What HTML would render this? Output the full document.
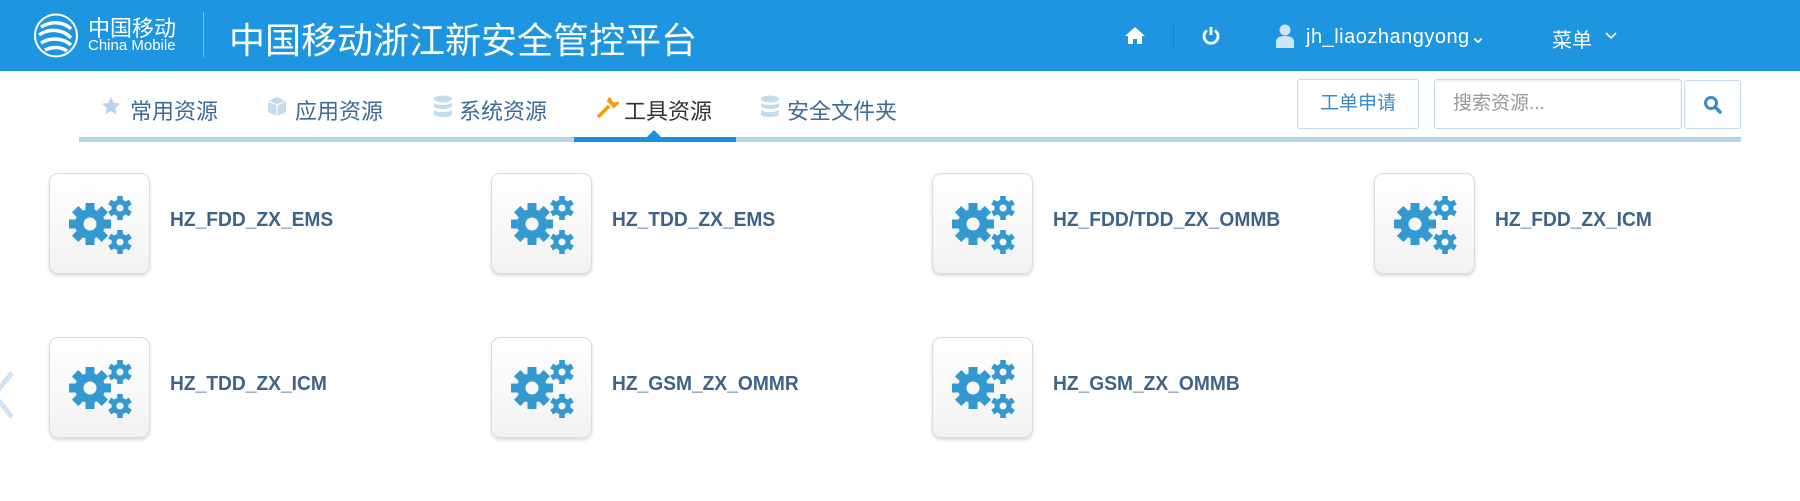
<!DOCTYPE html>
<html><head><meta charset="utf-8"><style>
*{margin:0;padding:0;box-sizing:border-box}
body{width:1800px;height:501px;background:#fff;font-family:"Liberation Sans","Noto Sans CJK SC",sans-serif;position:relative;overflow:hidden}
.hdr{position:absolute;left:0;top:0;width:1800px;height:71px;background:#1e95e1;color:#fff}
.a{position:absolute;white-space:nowrap}
.tab{position:absolute;top:94px;font-size:22px;color:#3d6b99;white-space:nowrap}
.card{position:absolute;width:101px;height:101px;border:1px solid #dcdcdc;border-radius:9px;background:linear-gradient(#fff,#f2f2f2);box-shadow:0 2px 3px rgba(0,0,0,.15)}
.lbl{position:absolute;font-size:20px;font-weight:bold;color:#3f6288;white-space:nowrap;transform:scaleX(.96);transform-origin:left}
</style></head><body>
<div class="hdr">
 <svg class="a" style="left:33px;top:13px" width="46" height="45" viewBox="0 0 46 45"><circle cx="23" cy="22.5" r="21" fill="none" stroke="#fff" stroke-width="2"/><path d="M8 14c10-6 22-6 30 2M6 22c10-7 24-6 32 3M8 30c10-6 22-5 30 2M12 37c8-4 16-3 22 1" stroke="#fff" stroke-width="3.5" fill="none"/></svg>
 <div class="a" style="left:88px;top:11px;font-size:22px;letter-spacing:0px">中国移动</div>
 <div class="a" style="left:88px;top:37px;font-size:15px">China Mobile</div>
 <div class="a" style="left:203px;top:12px;width:1px;height:45px;background:rgba(255,255,255,.4)"></div>
 <div class="a" style="left:229px;top:12px;font-size:36px">中国移动浙江新安全管控平台</div>
 <svg class="a" style="left:1124px;top:26px" width="22" height="18" viewBox="0 0 22 18"><path d="M11 1L1 10h3v8h5v-5h4v5h5v-8h3z" fill="#fff"/></svg>
 <div class="a" style="left:1173px;top:23px;width:1px;height:24px;background:rgba(0,0,0,.15)"></div>
 <svg class="a" style="left:1202px;top:26px" width="18" height="19" viewBox="0 0 18 19"><path d="M5 4.5A7 7 0 1 0 13 4.5" stroke="#fff" stroke-width="2.8" fill="none"/><path d="M9 1v8" stroke="#fff" stroke-width="2.8"/></svg>
 <svg class="a" style="left:1275px;top:24px" width="20" height="24" viewBox="0 0 20 24"><circle cx="10" cy="6" r="5.5" fill="#cfe6f8"/><path d="M1 24v-6c0-4 3-6 9-6s9 2 9 6v6z" fill="#cfe6f8"/></svg>
 <div class="a" style="left:1306px;top:24px;font-size:20px;letter-spacing:.5px">jh_liaozhangyong⌄</div>
 <div class="a" style="left:1552px;top:24px;font-size:20px">菜单</div>
 <svg class="a" style="left:1605px;top:32px" width="12" height="8" viewBox="0 0 12 8"><path d="M1 1l5 5 5-5" stroke="#fff" stroke-width="1.6" fill="none"/></svg>
</div>
<svg class="a" style="left:101px;top:96px" width="20" height="20" viewBox="0 0 20 20"><path d="M10 1l2.8 6 6.4.6-4.9 4.3 1.5 6.4L10 15l-5.8 3.3 1.5-6.4L.8 7.6l6.4-.6z" fill="#b8d4ea"/></svg>
<div class="tab" style="left:130px">常用资源</div>
<svg class="a" style="left:267px;top:96px" width="20" height="21" viewBox="0 0 20 21"><path d="M10 1l9 4v11l-9 4-9-4V5z" fill="#c5dcee"/><path d="M1 5l9 4 9-4M10 9v11" stroke="#fff" stroke-width="1.2" fill="none"/></svg>
<div class="tab" style="left:295px">应用资源</div>
<svg class="a" style="left:433px;top:95px" width="20" height="24" viewBox="0 0 20 24"><ellipse cx="10" cy="4" rx="9" ry="3.5" fill="#c5dcee"/><path d="M1 7c0 4 18 4 18 0v4c0 4-18 4-18 0zM1 14c0 4 18 4 18 0v5c0 4-18 4-18 0z" fill="#c5dcee"/></svg>
<div class="tab" style="left:459px">系统资源</div>
<svg class="a" style="left:597px;top:96px" width="22" height="22" viewBox="0 0 22 22"><path d="M2 20l9-9M13 2a5 5 0 0 0 6 6l-2 2-5-5z" stroke="#f39c12" stroke-width="3.5" fill="#f39c12" stroke-linecap="round"/></svg>
<div class="tab" style="left:624px;color:#333">工具资源</div>
<svg class="a" style="left:760px;top:95px" width="20" height="24" viewBox="0 0 20 24"><ellipse cx="10" cy="4" rx="9" ry="3.5" fill="#c5dcee"/><path d="M1 7c0 4 18 4 18 0v4c0 4-18 4-18 0zM1 14c0 4 18 4 18 0v5c0 4-18 4-18 0z" fill="#c5dcee"/></svg>
<div class="tab" style="left:787px">安全文件夹</div>
<div class="a" style="left:79px;top:137px;width:1662px;height:5px;background:#b6d4e7"></div>
<div class="a" style="left:574px;top:137px;width:162px;height:5px;background:#1e8fdb"></div>
<div class="a" style="left:647px;top:130px;width:0;height:0;border-left:7px solid transparent;border-right:7px solid transparent;border-bottom:7px solid #1e8fdb"></div>
<div class="a" style="left:1297px;top:79px;width:122px;height:50px;border:1px solid #c5d9ec;border-radius:3px;color:#3b8ac8;font-size:19px;text-align:center;line-height:48px">工单申请</div>
<div class="a" style="left:1434px;top:79px;width:248px;height:50px;border:1px solid #c5d9ec;border-radius:3px;color:#999;font-size:19px;line-height:48px;padding-left:18px;box-shadow:inset 0 1px 2px rgba(0,0,0,.08)">搜索资源...</div>
<div class="a" style="left:1684px;top:80px;width:57px;height:49px;border:1px solid #c5d9ec;border-radius:3px"></div>
<svg class="a" style="left:1703px;top:95px" width="20" height="20" viewBox="0 0 20 20"><circle cx="8" cy="8" r="5.5" stroke="#3b8ac8" stroke-width="3" fill="none"/><path d="M12 12l5 5" stroke="#3b8ac8" stroke-width="3.5" stroke-linecap="round"/></svg>
<svg class="a" style="left:0;top:370px" width="14" height="50" viewBox="0 0 14 50"><path d="M12 3L-6 25 12 47" stroke="#d3e3ef" stroke-width="5" fill="none"/></svg>
<svg width="0" height="0" style="position:absolute"><defs>
<g id="g"><circle r="15" fill="#3399d0"/><g fill="#3399d0"><rect x="-4.5" y="-21" width="9" height="42"/><rect x="-4.5" y="-21" width="9" height="42" transform="rotate(45)"/><rect x="-4.5" y="-21" width="9" height="42" transform="rotate(90)"/><rect x="-4.5" y="-21" width="9" height="42" transform="rotate(135)"/></g><circle r="6.5" fill="#f8f8f8"/></g>
<g id="s"><circle r="8.5" fill="#3399d0"/><g fill="#3399d0"><rect x="-2.8" y="-12" width="5.6" height="24"/><rect x="-2.8" y="-12" width="5.6" height="24" transform="rotate(60)"/><rect x="-2.8" y="-12" width="5.6" height="24" transform="rotate(120)"/></g><circle r="3.5" fill="#f8f8f8"/></g>
<g id="ic"><use href="#g" x="40" y="50"/><use href="#s" x="70" y="34"/><use href="#s" x="70" y="68"/></g>
</defs></svg>

<div class="card" style="left:49px;top:173px"><svg width="101" height="101"><use href="#ic"/></svg></div>
<div class="lbl" style="left:170px;top:209px">HZ_FDD_ZX_EMS</div>
<div class="card" style="left:491px;top:173px"><svg width="101" height="101"><use href="#ic"/></svg></div>
<div class="lbl" style="left:612px;top:209px">HZ_TDD_ZX_EMS</div>
<div class="card" style="left:932px;top:173px"><svg width="101" height="101"><use href="#ic"/></svg></div>
<div class="lbl" style="left:1053px;top:209px">HZ_FDD/TDD_ZX_OMMB</div>
<div class="card" style="left:1374px;top:173px"><svg width="101" height="101"><use href="#ic"/></svg></div>
<div class="lbl" style="left:1495px;top:209px">HZ_FDD_ZX_ICM</div>
<div class="card" style="left:49px;top:337px"><svg width="101" height="101"><use href="#ic"/></svg></div>
<div class="lbl" style="left:170px;top:373px">HZ_TDD_ZX_ICM</div>
<div class="card" style="left:491px;top:337px"><svg width="101" height="101"><use href="#ic"/></svg></div>
<div class="lbl" style="left:612px;top:373px">HZ_GSM_ZX_OMMR</div>
<div class="card" style="left:932px;top:337px"><svg width="101" height="101"><use href="#ic"/></svg></div>
<div class="lbl" style="left:1053px;top:373px">HZ_GSM_ZX_OMMB</div>
</body></html>
